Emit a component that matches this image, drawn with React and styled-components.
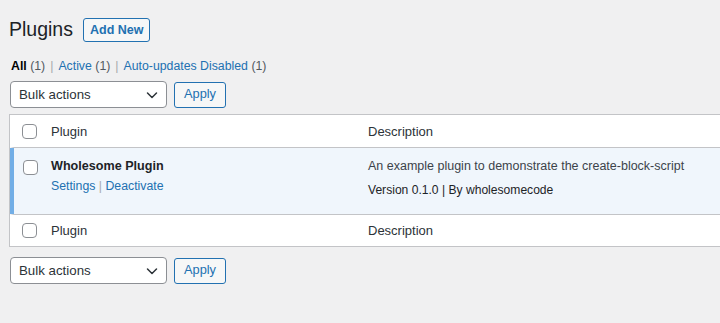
import React from 'react';
import styled, { createGlobalStyle } from 'styled-components';

const GlobalStyle = createGlobalStyle`
  html, body {
    margin: 0;
    padding: 0;
    background: #f0f0f1;
    overflow: hidden;
  }
  body {
    font-family: "Liberation Sans", Arial, sans-serif;
    font-size: 12.5px;
    color: #3c434a;
  }
`;

const Wrap = styled.div`
  padding: 13px 0 0 9px;
`;

const TitleBar = styled.div`
  display: flex;
  align-items: center;
  gap: 10px;
  height: 34px;
`;

const Heading = styled.h1`
  margin: 0;
  font-size: 19.5px;
  font-weight: 400;
  color: #1d2327;
  line-height: 1.3;
`;

const OutlineButton = styled.button`
  font-family: inherit;
  font-size: ${(p) => p.fs || 12.5}px;
  font-weight: ${(p) => (p.strong ? 700 : 400)};
  color: #2271b1;
  background: #f6f7f7;
  border: 1px solid #2271b1;
  border-radius: 3px;
  height: ${(p) => p.h || 26}px;
  padding: 0 ${(p) => p.px || 8}px;
  line-height: 1;
  cursor: pointer;
`;

const Filters = styled.ul`
  display: flex;
  list-style: none;
  margin: 10px 0 0 2px;
  padding: 0;
  height: 18px;
  align-items: center;
  font-size: 12.3px;
`;

const FilterItem = styled.li`
  color: #50575e;
  white-space: pre;
`;

const FilterLink = styled.span`
  color: ${(p) => (p.current ? '#000' : '#2271b1')};
  font-weight: ${(p) => (p.current ? 700 : 400)};
`;

const Count = styled.span`
  color: #50575e;
`;

const Sep = styled.span`
  color: #a7aaad;
  margin: 0 5px;
`;

const Actions = styled.div`
  display: flex;
  align-items: center;
  gap: 7px;
  margin: ${(p) => p.m || '0'};
  padding-left: 1px;
`;

const Select = styled.div`
  display: flex;
  align-items: center;
  justify-content: space-between;
  box-sizing: border-box;
  width: 157px;
  height: 27px;
  padding: 0 6px 0 8px;
  background: #fff;
  border: 1px solid #8c8f94;
  border-radius: 4px;
  font-size: 13.3px;
  color: #2c3338;
`;

const Table = styled.div`
  width: 1000px;
  margin-top: 6px;
  background: #fff;
  border: 1px solid #c3c4c7;
  box-sizing: border-box;
`;

const Row = styled.div`
  display: grid;
  grid-template-columns: 29px 317px 1fr;
  box-sizing: border-box;
  height: ${(p) => p.h}px;
  background: ${(p) => (p.active ? '#f0f6fc' : '#fff')};
  border-left: 4px solid ${(p) => (p.active ? '#72aee6' : 'transparent')};
  border-top: ${(p) => (p.top ? '1px solid #c3c4c7' : 'none')};
  border-bottom: ${(p) => (p.bottom ? '1px solid #c3c4c7' : 'none')};
`;

const Cell = styled.div`
  padding: 0 8px;
  display: flex;
  flex-direction: column;
  justify-content: ${(p) => (p.center ? 'center' : 'flex-start')};
  font-size: ${(p) => p.fs || 12.5}px;
  color: #2c3338;
`;

const CheckCell = styled.div`
  display: flex;
  align-items: ${(p) => (p.center ? 'center' : 'flex-start')};
  padding: ${(p) => (p.center ? '0 0 0 8px' : '12px 0 0 9px')};
`;

const Checkbox = styled.span`
  display: block;
  width: 15px;
  height: 15px;
  box-sizing: border-box;
  border: 1px solid #8c8f94;
  border-radius: 4px;
  background: #fff;
`;

const PluginTitle = styled.strong`
  font-size: 12.6px;
  font-weight: 700;
  color: #1d2327;
  margin-top: 11px;
`;

const RowActions = styled.div`
  margin-top: 6px;
  font-size: 12.3px;
  color: #a7aaad;
`;

const Link = styled.span`
  color: #2271b1;
`;

const DescText = styled.p`
  margin: 10px 0 0 0;
  font-size: 12.5px;
  color: #3c434a;
  line-height: 1.4;
`;

const Version = styled.div`
  margin-top: 7px;
  font-size: 12.1px;
  color: #1d2327;
`;

function Chevron() {
  return (
    <svg width="16" height="16" viewBox="0 0 16 16" fill="none">
      <path d="M3.5 6l4.5 4.5L12.5 6" stroke="#2c3338" strokeWidth="1.5" strokeLinecap="round" strokeLinejoin="round" />
    </svg>
  );
}

function BulkBar({ m }) {
  return (
    <Actions m={m}>
      <Select>
        <span>Bulk actions</span>
        <Chevron />
      </Select>
      <OutlineButton px={9} h={26} fs={12.8}>Apply</OutlineButton>
    </Actions>
  );
}

export default function App() {
  return (
    <>
      <GlobalStyle />
      <Wrap>
        <TitleBar>
          <Heading>Plugins</Heading>
          <OutlineButton strong h={24} px={6}>Add New</OutlineButton>
        </TitleBar>
        <Filters>
          <FilterItem><FilterLink current>All</FilterLink> <Count>(1)</Count></FilterItem>
          <Sep>|</Sep>
          <FilterItem><FilterLink>Active</FilterLink> <Count>(1)</Count></FilterItem>
          <Sep>|</Sep>
          <FilterItem><FilterLink>Auto-updates Disabled</FilterLink> <Count>(1)</Count></FilterItem>
        </Filters>
        <BulkBar m="6px 0 0 0" />
        <Table>
          <Row h={33} bottom>
            <CheckCell center><Checkbox /></CheckCell>
            <Cell center fs={13}>Plugin</Cell>
            <Cell center fs={13}>Description</Cell>
          </Row>
          <Row h={66} active>
            <CheckCell><Checkbox /></CheckCell>
            <Cell>
              <PluginTitle>Wholesome Plugin</PluginTitle>
              <RowActions>
                <Link>Settings</Link> | <Link>Deactivate</Link>
              </RowActions>
            </Cell>
            <Cell>
              <DescText>An example plugin to demonstrate the create-block-script</DescText>
              <Version>Version 0.1.0 | By wholesomecode</Version>
            </Cell>
          </Row>
          <Row h={32} top>
            <CheckCell center><Checkbox /></CheckCell>
            <Cell center fs={13}>Plugin</Cell>
            <Cell center fs={13}>Description</Cell>
          </Row>
        </Table>
        <BulkBar m="10px 0 0 0" />
      </Wrap>
    </>
  );
}
